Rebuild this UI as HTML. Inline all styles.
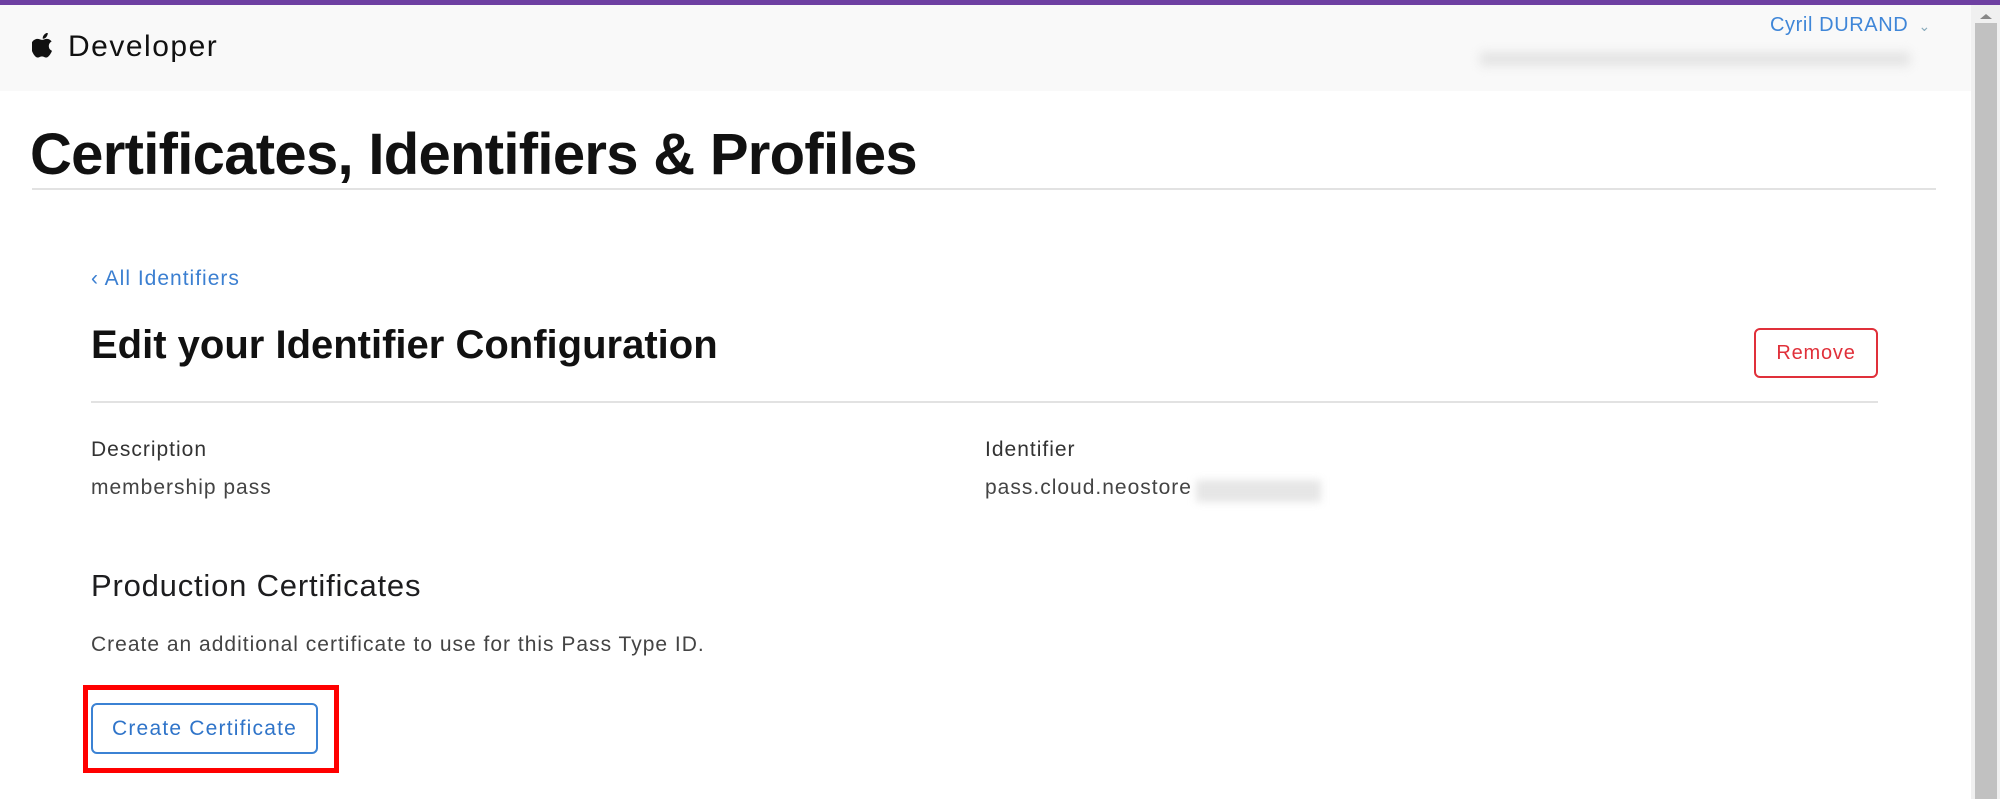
<!DOCTYPE html>
<html><head><meta charset="utf-8">
<style>
*{margin:0;padding:0;box-sizing:border-box}
html,body{width:2000px;height:799px;overflow:hidden;background:#fff;font-family:"Liberation Sans",sans-serif;color:#1d1d1f}
.abs{position:absolute;white-space:nowrap}
.t{font-size:21px;letter-spacing:1px}
</style></head><body>
<div class="abs" style="left:0;top:0;width:2000px;height:5px;background:#6e40a2"></div>
<div class="abs" style="left:0;top:5px;width:1971px;height:86px;background:#f9f9f9"></div>
<svg class="abs" style="left:32px;top:33px" width="24" height="28" viewBox="0 0 170 200"><path fill="#111" d="M150 155c-5 12-8 17-14 27-9 13-21 30-36 30-13 0-17-9-35-9s-22 9-35 9C15 212 4 197-5 184c-24-37-27-80-12-103 11-16 28-26 44-26s27 9 40 9 21-9 40-9c14 0 29 8 40 21-35 19-30 70 3 79zM103 38c7-9 12-21 11-34-11 1-24 8-31 17-7 8-13 21-11 33 12 1 24-7 31-16z" transform="translate(15 -5) scale(0.85)"/></svg>
<div class="abs" style="left:68px;top:30px;font-size:30px;color:#111;letter-spacing:1.5px">Developer</div>
<div class="abs" style="left:1770px;top:14px;font-size:20px;color:#3f86d8;letter-spacing:0.6px">Cyril DURAND <span style="font-size:14px;color:#8ab;margin-left:4px">&#8964;</span></div>
<div class="abs" style="left:1480px;top:52px;width:430px;height:14px;background:#e4e4e4;filter:blur(5px)"></div>
<div class="abs" style="left:1971px;top:5px;width:29px;height:794px;background:#f0f0f0"></div>
<div class="abs" style="left:1980px;top:14px;width:0;height:0;border-left:6px solid transparent;border-right:6px solid transparent;border-bottom:5px solid #888"></div>
<div class="abs" style="left:1975px;top:23px;width:22px;height:776px;background:#c1c1c1"></div>
<div class="abs" style="left:30px;top:121px;font-size:58px;font-weight:bold;color:#111;letter-spacing:-0.7px">Certificates, Identifiers &amp; Profiles</div>
<div class="abs" style="left:32px;top:188px;width:1904px;height:2px;background:#e2e2e2"></div>
<div class="abs" style="left:91px;top:267px;font-size:21px;letter-spacing:1px;color:#3b7fd1">&#8249; All Identifiers</div>
<div class="abs" style="left:91px;top:323px;font-size:40px;font-weight:bold;color:#111;letter-spacing:0px">Edit your Identifier Configuration</div>
<div class="abs" style="left:1754px;top:328px;width:124px;height:50px;border:2px solid #e0303a;border-radius:6px;color:#e0303a;font-size:20px;letter-spacing:0.8px;text-align:center;line-height:46px">Remove</div>
<div class="abs" style="left:91px;top:401px;width:1787px;height:2px;background:#e2e2e2"></div>
<div class="abs t" style="left:91px;top:438px;color:#333">Description</div>
<div class="abs t" style="left:91px;top:476px;color:#444">membership pass</div>
<div class="abs t" style="left:985px;top:438px;color:#333">Identifier</div>
<div class="abs t" style="left:985px;top:476px;color:#444">pass.cloud.neostore</div>
<div class="abs" style="left:1196px;top:480px;width:125px;height:22px;background:#e6e6e6;filter:blur(4px)"></div>
<div class="abs" style="left:91px;top:568px;font-size:31px;letter-spacing:0.8px;color:#1d1d1f">Production Certificates</div>
<div class="abs t" style="left:91px;top:633px;color:#444">Create an additional certificate to use for this Pass Type ID.</div>
<div class="abs" style="left:83px;top:685px;width:256px;height:88px;border:5px solid #f00"></div>
<div class="abs" style="left:91px;top:703px;width:227px;height:51px;border:2px solid #3b82d4;border-radius:6px;color:#2f74c9;font-size:21px;letter-spacing:1.2px;text-align:center;line-height:47px">Create Certificate</div>
</body></html>
